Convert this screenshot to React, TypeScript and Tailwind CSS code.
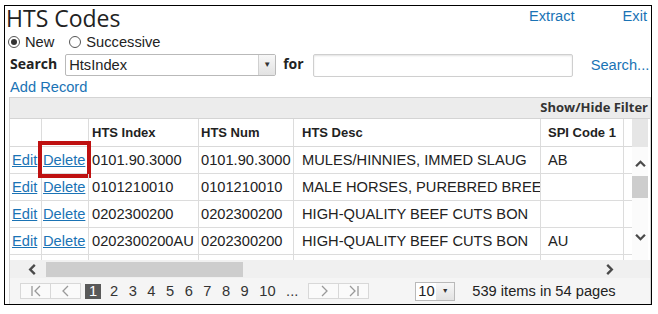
import React from "react";

const rows = [
  { idx: "0101.90.3000", num: "0101.90.3000", desc: "MULES/HINNIES, IMMED SLAUG", spi: "AB" },
  { idx: "0101210010", num: "0101210010", desc: "MALE HORSES, PUREBRED BREE", spi: "" },
  { idx: "0202300200", num: "0202300200", desc: "HIGH-QUALITY BEEF CUTS BON", spi: "" },
  { idx: "0202300200AU", num: "0202300200", desc: "HIGH-QUALITY BEEF CUTS BON", spi: "AU" },
];

const link = "text-[#1a73b5]";

const Chevron = ({ dir, className = "" }: { dir: "up" | "down" | "left" | "right"; className?: string }) => {
  const d = {
    up: "M1 7 L6 2 L11 7",
    down: "M1 2 L6 7 L11 2",
    left: "M7 1 L2 6 L7 11",
    right: "M2 1 L7 6 L2 11",
  }[dir];
  const vb = dir === "up" || dir === "down" ? "0 0 12 9" : "0 0 9 12";
  return (
    <svg viewBox={vb} className={className} fill="none" stroke="#4a4a4a" strokeWidth={2.6}>
      <path d={d} />
    </svg>
  );
};

const PagerBtn = ({ kind }: { kind: "first" | "prev" | "next" | "last" }) => (
  <div className="flex h-[16px] w-[31px] items-center justify-center border border-[#d8d8d8] bg-[#fafafa]">
    <svg viewBox="0 0 12 12" className="h-[12px] w-[12px]" fill="none" stroke="#999" strokeWidth={1.3}>
      {kind === "first" && (
        <>
          <path d="M2 1 V11" />
          <path d="M10 1 L5 6 L10 11" />
        </>
      )}
      {kind === "prev" && <path d="M8 1 L3 6 L8 11" />}
      {kind === "next" && <path d="M4 1 L9 6 L4 11" />}
      {kind === "last" && (
        <>
          <path d="M2 1 L7 6 L2 11" />
          <path d="M10 1 V11" />
        </>
      )}
    </svg>
  </div>
);

const Radio = ({ checked }: { checked?: boolean }) => (
  <span className="flex h-[12px] w-[12px] items-center justify-center rounded-full border border-[#555] bg-white">
    {checked && <span className="h-[6px] w-[6px] rounded-full bg-[#333]" />}
  </span>
);

export default function App() {
  return (
    <div className="h-[314px] w-[658px] bg-white pt-[5px] font-['Liberation_Sans',Arial,sans-serif] text-[14.67px] text-[#222]">
      <div className="ml-[4px] flex h-[300px] w-[648px] flex-col border border-black">
        {/* Title row */}
        <div className="flex h-[26px] items-start justify-between pl-[1px] pr-[4px]">
          <span className="font-['Open_Sans',sans-serif] text-[23px] leading-[24px] text-[#222]">HTS Codes</span>
          <div className="mt-[2px] flex gap-[48px] leading-[17px]">
            <span className={link}>Extract</span>
            <span className={link}>Exit</span>
          </div>
        </div>

        {/* Radios */}
        <div className="flex h-[20px] items-center pl-[3px] leading-[17px]">
          <Radio checked />
          <span className="ml-[5px]">New</span>
          <span className="ml-[15px]">
            <Radio />
          </span>
          <span className="ml-[5px]">Successive</span>
        </div>

        {/* Search row */}
        <div className="flex h-[26px] items-center pl-[5px]">
          <span className="mb-[4px] font-['Open_Sans',sans-serif] text-[14px] font-bold">Search</span>
          <div className="ml-[8px] flex h-[22px] w-[211px] items-stretch rounded-[2px] border border-[#b9b9b9] bg-white">
            <span className="flex flex-1 items-center pl-[3px]">HtsIndex</span>
            <span className="flex w-[17px] items-center justify-center border-l border-[#d0d0d0] bg-gradient-to-b from-[#f7f7f7] to-[#e2e2e2] text-[8px] text-[#333]">
              ▼
            </span>
          </div>
          <span className="mb-[4px] ml-[7px] font-['Open_Sans',sans-serif] text-[14px] font-bold">for</span>
          <div className="ml-[9px] h-[23px] w-[260px] rounded-[2px] border border-[#cfcfcf] bg-white shadow-[inset_0_1px_2px_rgba(0,0,0,0.12)]" />
          <span className={`ml-[18px] ${link}`}>Search...</span>
        </div>

        {/* Add record */}
        <div className="flex h-[19px] items-center pl-[5px] leading-[17px]">
          <span className={link}>Add Record</span>
        </div>

        {/* Grid */}
        <div className="ml-[4px] flex flex-1 flex-col border-l border-r border-t border-[#d4d4d4]">
          {/* toolbar */}
          <div className="flex h-[21px] items-center justify-end border-b border-[#d4d4d4] bg-[#ececec] pr-[2px] font-['Open_Sans',sans-serif] text-[13px] font-bold text-[#333]">
            Show/Hide Filter
          </div>

          <div className="flex">
            <div className="flex flex-col">
              {/* header */}
              <div className="flex h-[28px] border-b border-[#d9d9d9] text-[13px] font-bold text-[#222]">
                <div className="w-[32px] border-r border-[#dcdcdc]" />
                <div className="w-[47px] border-r border-[#dcdcdc]" />
                <div className="flex w-[110px] items-center border-r border-[#dcdcdc] pl-[3px]">HTS Index</div>
                <div className="flex w-[95px] items-center border-r border-[#dcdcdc] pl-[2px]">HTS Num</div>
                <div className="flex w-[247px] items-center border-r border-[#dcdcdc] pl-[8px]">HTS Desc</div>
                <div className="flex w-[83px] items-center border-r border-[#dcdcdc] pl-[7px]">SPI Code 1</div>
                <div className="w-[8px]" />
              </div>

              {rows.map((r, i) => (
                <div key={i} className="flex h-[27px] whitespace-nowrap border-b border-[#dcdcdc]">
                  <div className="flex w-[32px] items-center border-r border-[#dcdcdc] pl-[2px]">
                    <span className={`${link} underline`}>Edit</span>
                  </div>
                  <div className="relative flex w-[47px] items-center border-r border-[#dcdcdc] pl-[1px]">
                    <span className={`${link} underline`}>Delete</span>
                    {i === 0 && (
                      <div className="absolute left-[-4px] top-[-6px] h-[37px] w-[53px] border-[4px] border-[#bf1111]" />
                    )}
                  </div>
                  <div className="flex w-[110px] items-center overflow-hidden border-r border-[#dcdcdc] pl-[3px]">{r.idx}</div>
                  <div className="flex w-[95px] items-center overflow-hidden border-r border-[#dcdcdc] pl-[2px]">{r.num}</div>
                  <div className="flex w-[247px] items-center overflow-hidden border-r border-[#dcdcdc] pl-[8px]">{r.desc}</div>
                  <div className="flex w-[83px] items-center border-r border-[#dcdcdc] pl-[7px]">{r.spi}</div>
                  <div className="w-[8px]" />
                </div>
              ))}

              {/* partial row */}
              <div className="flex h-[5px]">
                <div className="w-[32px] border-r border-[#dcdcdc]" />
                <div className="w-[47px] border-r border-[#dcdcdc]" />
                <div className="w-[110px] border-r border-[#dcdcdc]" />
                <div className="w-[95px] border-r border-[#dcdcdc]" />
                <div className="w-[247px] border-r border-[#dcdcdc]" />
                <div className="w-[83px] border-r border-[#dcdcdc]" />
              </div>
            </div>

            {/* vertical scrollbar */}
            <div className="flex w-[18px] flex-col">
              <div className="h-[28px] w-[16px] bg-[#e6e6e6]" />
              <div className="flex w-[16px] flex-1 flex-col items-center bg-[#fbfbfb]">
                <Chevron dir="up" className="mt-[13px] h-[8px] w-[11px]" />
                <div className="mt-[8px] h-[22px] w-[16px] bg-[#cdcdcd]" />
                <Chevron dir="down" className="mt-[35px] h-[8px] w-[11px]" />
              </div>
            </div>
          </div>

          {/* horizontal scrollbar */}
          <div className="flex h-[18px] items-center bg-[#f0f0f0] pl-[18px]">
            <Chevron dir="left" className="h-[11px] w-[9px]" />
            <div className="ml-[9px] h-[15px] w-[197px] bg-[#cdcdcd]" />
            <div className="flex-1" />
            <Chevron dir="right" className="mr-[36px] h-[11px] w-[9px]" />
          </div>

          {/* pager */}
          <div className="flex flex-1 items-center bg-[#f5f5f5] pl-[10px]">
            <div className="flex">
              <PagerBtn kind="first" />
              <div className="-ml-px">
                <PagerBtn kind="prev" />
              </div>
            </div>
            <span className="ml-[4px] flex h-[15px] w-[16px] items-center justify-center bg-[#595959] text-white">1</span>
            <div className="ml-[9px] flex gap-[10.5px] text-[#333]">
              {["2", "3", "4", "5", "6", "7", "8", "9", "10", "..."].map((n) => (
                <span key={n}>{n}</span>
              ))}
            </div>
            <div className="ml-[10px] flex">
              <PagerBtn kind="next" />
              <div className="-ml-px">
                <PagerBtn kind="last" />
              </div>
            </div>
            <div className="ml-[46px] flex h-[19px] w-[40px] items-stretch border border-[#b9b9b9] bg-white">
              <span className="flex flex-1 items-center pl-[2px]">10</span>
              <span className="flex w-[18px] items-center justify-center bg-gradient-to-b from-[#f7f7f7] to-[#e2e2e2] text-[7px] text-[#333]">
                ▼
              </span>
            </div>
            <span className="ml-[17px] text-[#222]">539 items in 54 pages</span>
          </div>
        </div>
      </div>
    </div>
  );
}
